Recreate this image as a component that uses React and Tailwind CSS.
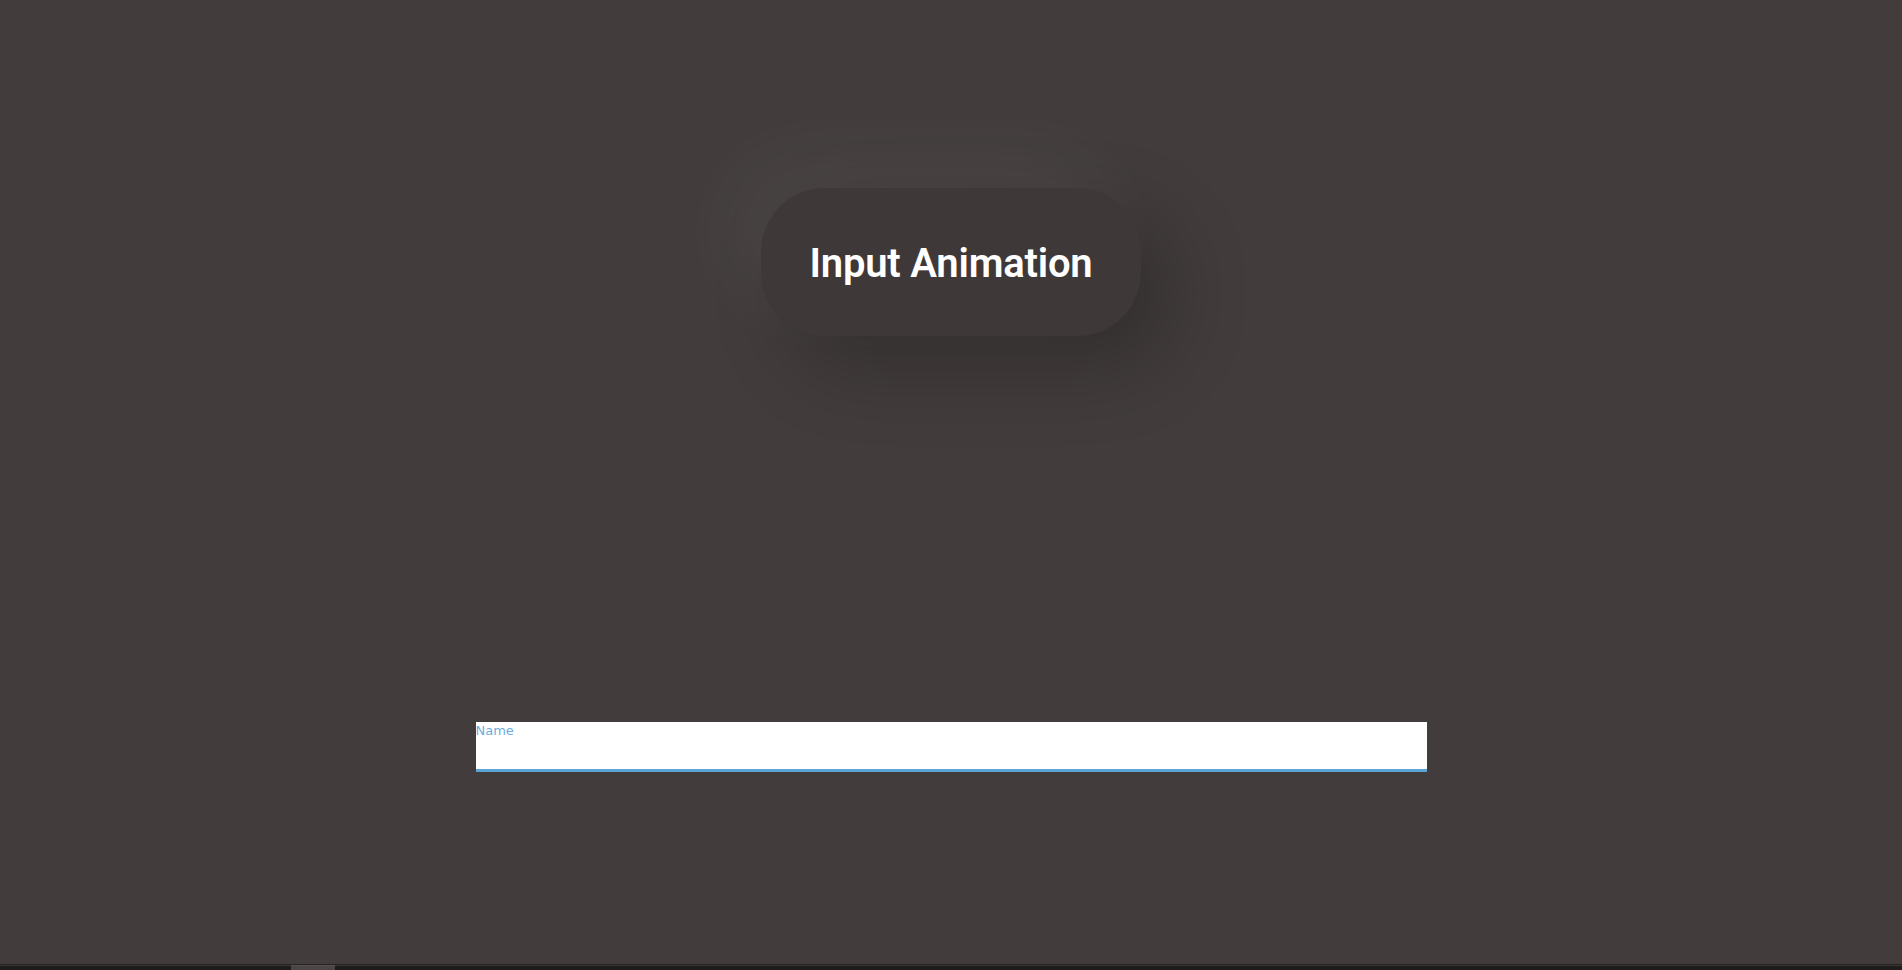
export default function App() {
  return (
    <div className="w-full h-[970px] flex flex-col bg-[#423c3c] overflow-hidden">
      <main className="flex-1 flex flex-col items-center pt-[188px]">
        <div className="w-[380px] h-[148px] rounded-[64px] bg-[#3e3838] flex items-center justify-center pt-[4px] shadow-[-30px_-30px_80px_rgba(255,255,255,0.05),30px_30px_80px_rgba(0,0,0,0.22)]">
          <h1
            className="text-[40px] font-semibold tracking-[-0.2px] text-white leading-none"
            style={{ fontFamily: "Roboto, 'Liberation Sans', sans-serif" }}
          >
            Input Animation
          </h1>
        </div>
        <div className="mt-[386px] w-1/2 relative h-[50px] bg-white border-b-[3px] border-[#5ba4d6]">
          <label
            className="absolute top-[1px] left-0 text-[13px] leading-[15px] text-[#6aaee0]"
            style={{ fontFamily: "'DejaVu Sans', Verdana, sans-serif" }}
          >
            Name
          </label>
        </div>
      </main>
      <div className="h-[6px] flex flex-col">
        <div className="h-[1px] bg-[#272323]"></div>
        <div className="h-[1px] bg-[#3a3535] flex">
          <div className="ml-[291px] w-[44px] bg-[#575252]"></div>
        </div>
        <div className="flex-1 bg-[#1f1c1c] flex">
          <div className="ml-[291px] w-[44px] bg-[#4a4646]"></div>
        </div>
      </div>
    </div>
  );
}
